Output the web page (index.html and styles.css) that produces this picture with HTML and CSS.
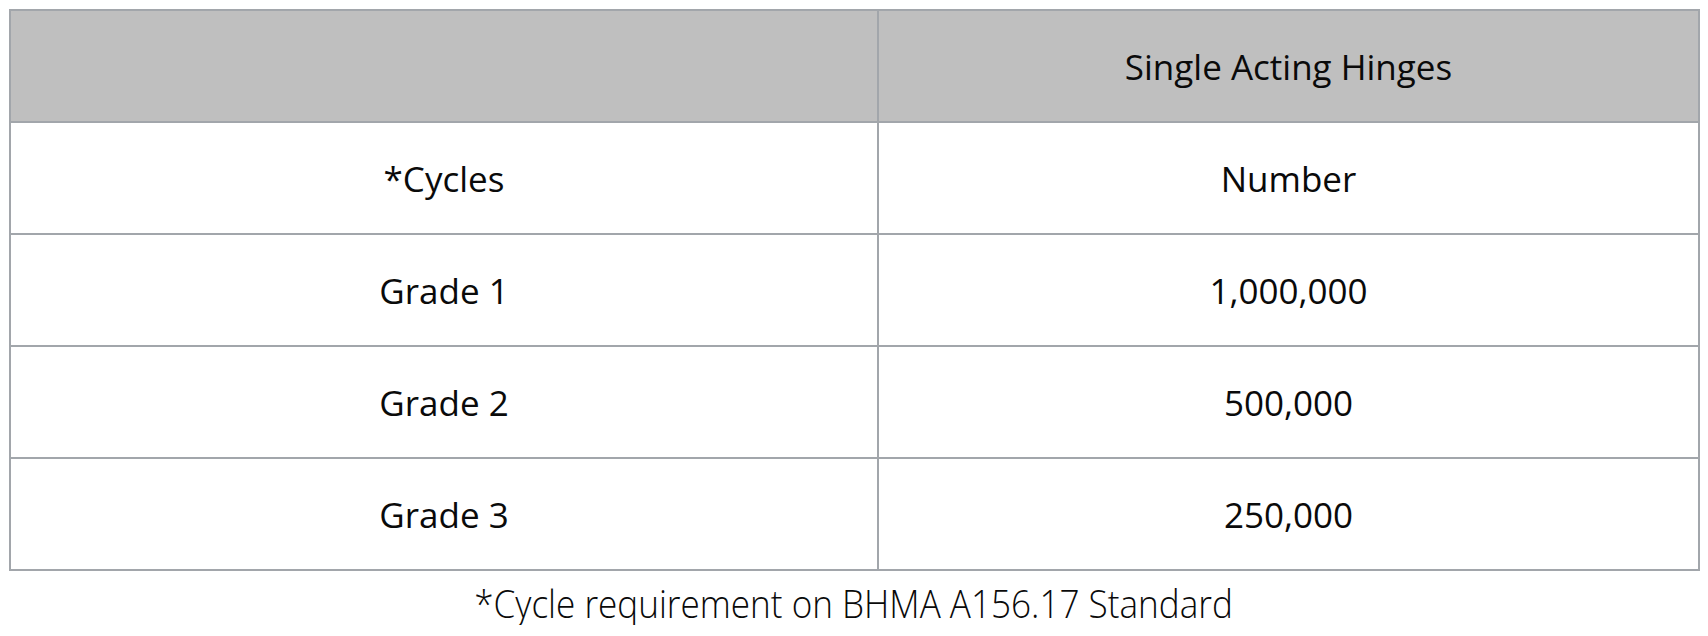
FILE: index.html
```html
<!DOCTYPE html>
<html>
<head>
<meta charset="utf-8">
<link rel="stylesheet" href="styles.css">
</head>
<body>
<div class="wrap">
  <table class="grades">
    <colgroup><col class="c1"><col class="c2"></colgroup>
    <thead>
      <tr class="head"><th></th><th>Single Acting Hinges</th></tr>
    </thead>
    <tbody>
      <tr><td>*Cycles</td><td>Number</td></tr>
      <tr><td>Grade 1</td><td>1,000,000</td></tr>
      <tr><td>Grade 2</td><td>500,000</td></tr>
      <tr><td>Grade 3</td><td>250,000</td></tr>
    </tbody>
  </table>
  <p class="note"><span class="note-text">*Cycle requirement on BHMA A156.17 Standard</span></p>
</div>
</body>
</html>
```

FILE: styles.css
```css
html, body {
  margin: 0;
  padding: 0;
  background: #ffffff;
}
.wrap {
  padding: 9px 10px 0 9px;
  width: 1689px;
}
.grades {
  border-collapse: collapse;
  table-layout: fixed;
  width: 1689px;
  font-family: "Open Sans", "Noto Sans", sans-serif;
  font-size: 35px;
  color: #0a0a0a;
}
.c1 { width: 868px; }
.c2 { width: 821px; }
.grades th,
.grades td {
  border: 2px solid #a2a6ab;
  height: 110px;
  padding: 0;
  text-align: center;
  vertical-align: middle;
  font-weight: 500;
}
.head th {
  background: #bfbfbf;
}
.note {
  margin: 0;
  padding: 10px 0 0 0;
  text-align: center;
  font-family: "Open Sans", "Noto Sans", sans-serif;
  font-weight: 300;
  font-size: 39px;
  line-height: 44px;
  color: #0a0a0a;
}
.note-text {
  display: inline-block;
  transform: scaleX(0.9);
  transform-origin: center center;
  white-space: nowrap;
}
```
